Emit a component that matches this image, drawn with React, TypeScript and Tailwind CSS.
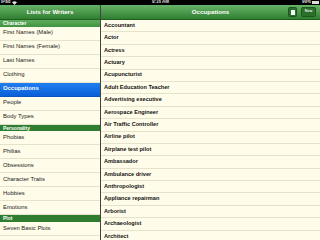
import React from "react";

const leftSections: { title: string; light?: boolean; items: string[] }[] = [
  { title: "Character", light: true, items: ["First Names (Male)", "First Names (Female)", "Last Names", "Clothing", "Occupations", "People", "Body Types"] },
  { title: "Personality", items: ["Phobias", "Philias", "Obsessions", "Character Traits", "Hobbies", "Emotions"] },
  { title: "Plot", items: ["Seven Basic Plots"] },
];

const occupations = [
  "Accountant", "Actor", "Actress", "Actuary", "Acupuncturist", "Adult Education Teacher",
  "Advertising executive", "Aerospace Engineer", "Air Traffic Controller", "Airline pilot",
  "Airplane test pilot", "Ambassador", "Ambulance driver", "Anthropologist",
  "Appliance repairman", "Arborist", "Archaeologist", "Architect",
];

export default function App() {
  return (
    <div
      className="w-[320px] h-[240px] overflow-hidden flex flex-col bg-[#fffde9]"
      style={{ fontFamily: '"Liberation Sans", Arial, sans-serif' }}
    >
      {/* status bar */}
      <div className="h-[5px] bg-black flex items-center justify-between px-[1px] text-white text-[4.5px] leading-none font-bold relative shrink-0">
        <div className="flex items-center gap-[1px] text-[#ddd]">
          <span>iPad</span>
          <svg width="5" height="4" viewBox="0 0 10 8">
            <path d="M5 8 L0 2.5 Q5 -1.5 10 2.5 Z" fill="#ddd" />
          </svg>
        </div>
        <span className="absolute left-[152px] text-[#ddd]">9:16 AM</span>
        <div className="flex items-center gap-[1px] text-[#ddd]">
          <span>99%</span>
          <div className="w-[7px] h-[3px] bg-[#ddd] border border-[#ddd]" />
        </div>
      </div>
      <div className="flex flex-1 min-h-0">
        {/* left panel */}
        <div className="w-[100px] flex flex-col shrink-0">
          <div className="h-[15px] shrink-0 bg-gradient-to-b from-[#68b468] to-[#2f7f31] border-b border-[#1f5f20] flex items-center justify-center text-white font-bold text-[6.1px]">
            Lists for Writers
          </div>
          {leftSections.map((s) => (
            <div key={s.title} className="flex flex-col">
              <div
                className={
                  "h-[6.7px] flex items-center pl-[3px] text-white font-bold text-[5px] leading-none " +
                  (s.light ? "bg-gradient-to-b from-[#5fae5f] to-[#3f9340]" : "bg-[#2f7d30]")
                }
              >
                {s.title}
              </div>
              {s.items.map((it) => {
                const sel = it === "Occupations";
                return (
                  <div
                    key={it}
                    className={
                      "h-[14px] flex items-center pl-[3px] text-[5.9px] leading-none border-b " +
                      (sel
                        ? "bg-gradient-to-b from-[#1f7ef0] to-[#0b5fd8] text-white font-bold border-[#0b55c0]"
                        : "text-[#222] border-[#e6e3cc]")
                    }
                  >
                    {it}
                  </div>
                );
              })}
            </div>
          ))}
        </div>
        <div className="w-px bg-[#444] shrink-0" />
        {/* right panel */}
        <div className="flex-1 flex flex-col min-w-0">
          <div className="h-[15px] shrink-0 bg-gradient-to-b from-[#68b468] to-[#2f7f31] border-b border-[#1f5f20] flex items-center justify-center text-white font-bold text-[6.2px] relative">
            Occupations
            <div className="absolute left-[187px] top-[2px] w-[9px] h-[10px] rounded-[1.5px] bg-[#2b6f2c] border border-[#1f5620] flex items-center justify-center">
              <div className="w-[4px] h-[5px] bg-white rounded-[0.5px]" />
            </div>
            <div className="absolute left-[200px] top-[2px] w-[15px] h-[10px] rounded-[1.5px] bg-[#2b6f2c] border border-[#1f5620] flex items-center justify-center text-[3.6px] font-bold text-[#e8f0e8]">
              New
            </div>
          </div>
          {occupations.map((o) => (
            <div
              key={o}
              className="h-[12.4px] shrink-0 flex items-center pl-[3px] text-[5.6px] leading-none font-bold text-[#111] border-b border-[#e6e3cc]"
            >
              {o}
            </div>
          ))}
        </div>
      </div>
    </div>
  );
}
